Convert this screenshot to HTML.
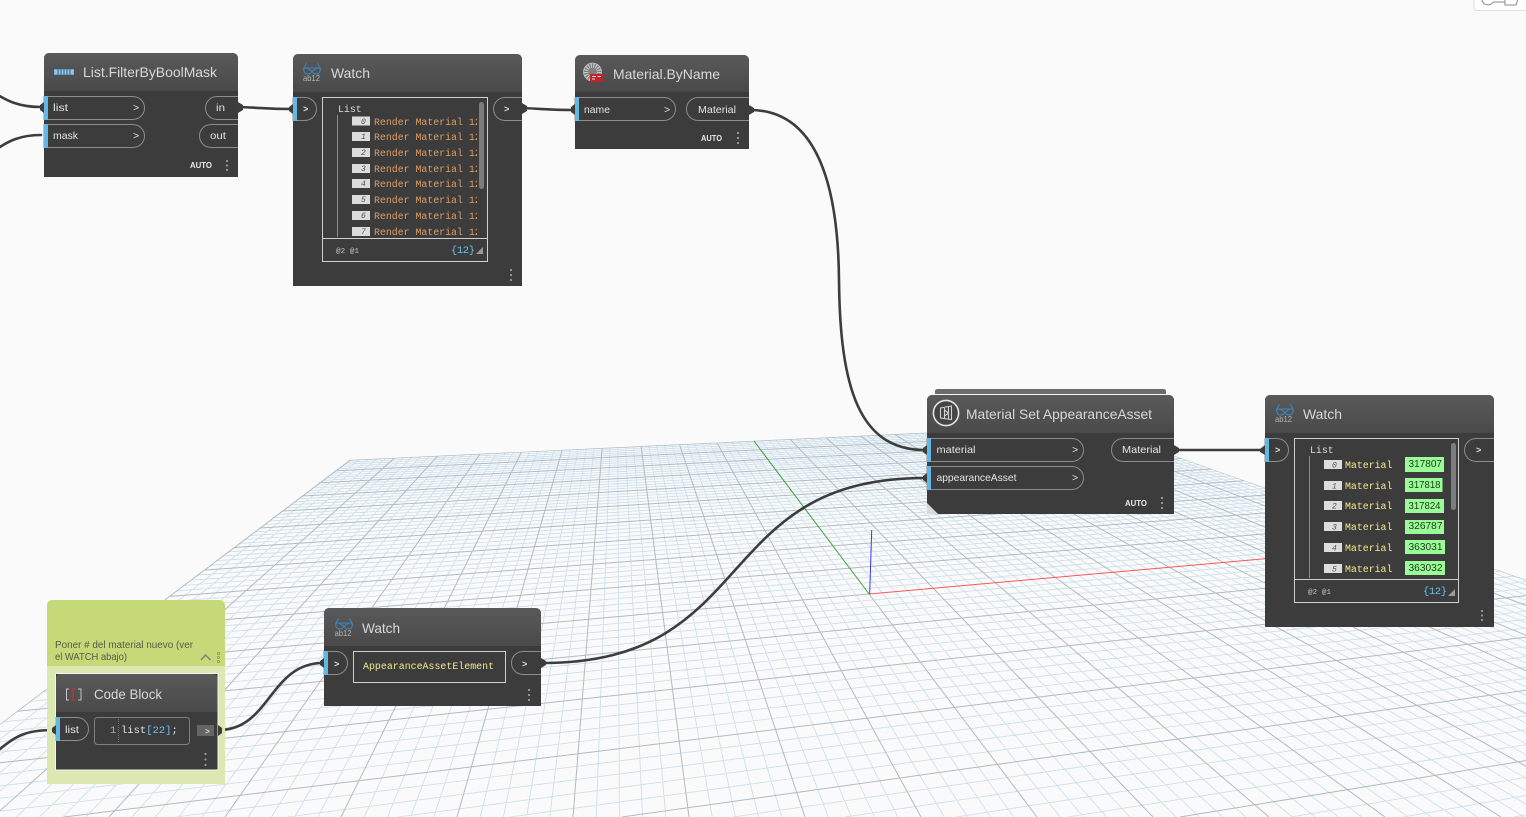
<!DOCTYPE html>
<html><head><meta charset="utf-8"><title>Dynamo graph</title>
<style>
html,body{margin:0;padding:0;background:#fafafa;width:1526px;height:817px;overflow:hidden}
svg{display:block;position:absolute;left:0;top:0}
text{font-family:"Liberation Sans",sans-serif;white-space:pre}
.t{font-size:14px;fill:#d8d8d8}
.p{font-size:10.5px;fill:#e4e4e4}
.a{font-size:8px;font-weight:bold;fill:#e8e8e8}
.m{font-family:"Liberation Mono",monospace;font-size:9.9px}
.or{fill:#dd9e66}
.ye{fill:#f3e88f}
.wh{fill:#dcdcdc}
.ix{font-family:"Liberation Mono",monospace;font-style:italic;font-size:8px;fill:#555}
.ft{font-family:"Liberation Mono",monospace;font-size:7.5px;fill:#c8c8c8}
.br{font-family:"Liberation Mono",monospace;font-size:10.5px;fill:#6ac0e7}
.gn{font-size:10.5px;fill:#1d3a1d}
.ab{font-size:8.5px;fill:#b5b5b5}
.arrow{font-family:"Liberation Mono",monospace;font-size:9px;font-weight:bold;fill:#ddd}
.nb{fill:#3c3c3c}
.pt{fill:#3c3c3c;stroke:#8c8c8c;stroke-width:1}
.bl{fill:#63b7e3}
.wire{fill:none;stroke:#3d3d3d;stroke-width:2.6;stroke-linecap:round}
.dot{fill:#3d3d3d}
.dots{fill:#9a9a9a}
.panel{fill:none;stroke:#cfcfcf;stroke-width:1}
</style></head><body>
<svg width="1526" height="817" viewBox="0 0 1526 817" xmlns="http://www.w3.org/2000/svg">
<defs>
<linearGradient id="hd" x1="0" y1="0" x2="0" y2="1"><stop offset="0" stop-color="#595959"/><stop offset="1" stop-color="#4a4a4a"/></linearGradient>
<clipPath id="plane"><polygon points="349,460 1087,425 2197,817 -123,817"/></clipPath>
<clipPath id="c1"><rect x="330" y="100" width="147" height="138"/></clipPath>
<clipPath id="c2"><rect x="1300" y="440" width="150" height="139"/></clipPath>
<symbol id="gl" viewBox="0 0 18 12" width="18" height="12" overflow="visible">
<path d="M3.5 .3 L1 5 M14.5 .3 L17 5 M.8 5 H17.2 V8.2 L15.4 10.8 H11 L9 8.2 L7 10.8 H2.6 L.8 8.2 Z M4 5 L9 8.2 L14 5" fill="none" stroke="#3f84bd" stroke-width="1.1" stroke-linejoin="round"/>
</symbol>
</defs>

<rect width="1526" height="817" fill="#fafafa"/>

<!-- top-right floating control -->
<path d="M1474 -2 V8 Q1474 10.5 1477 10.5 H1528 V-2 Z" fill="#fff" stroke="#dedede"/>
<path d="M1482 0 A6 6 0 0 0 1493 2 H1505 M1505 -1 V5 H1516 L1518 -1" fill="none" stroke="#8a8a8a" stroke-width="1"/>

<!-- perspective grid -->
<g clip-path="url(#plane)" fill="none">
<path stroke="#cbdfec" stroke-width="0.85" d="
M411.5 419L-99.8 817M418.1 419L-76.6 817M424.8 419L-53.4 817M431.4 419L-30.2 817
M444.7 419L16.2 817M451.4 419L39.4 817M458 419L62.6 817M464.7 419L85.8 817
M478 419L132.2 817M484.6 419L155.4 817M491.3 419L178.6 817M497.9 419L201.8 817
M511.2 419L248.2 817M517.9 419L271.4 817M524.5 419L294.6 817M531.2 419L317.8 817
M544.5 419L364.2 817M551.1 419L387.4 817M557.8 419L410.6 817M564.4 419L433.8 817
M577.8 419L480.2 817M584.4 419L503.4 817M591.1 419L526.6 817M597.7 419L549.8 817
M611 419L596.2 817M617.7 419L619.4 817M624.3 419L642.6 817M631 419L665.8 817
M644.3 419L712.2 817M650.9 419L735.4 817M657.6 419L758.6 817M664.2 419L781.8 817
M677.5 419L828.2 817M684.2 419L851.4 817M690.8 419L874.6 817M697.5 419L897.8 817
M710.8 419L944.2 817M717.4 419L967.4 817M724.1 419L990.6 817M730.7 419L1013.8 817
M744.1 419L1060.2 817M750.7 419L1083.4 817M757.4 419L1106.6 817M764 419L1129.8 817
M777.3 419L1176.2 817M784 419L1199.4 817M790.6 419L1222.6 817M797.3 419L1245.8 817
M810.6 419L1292.2 817M817.2 419L1315.4 817M823.9 419L1338.6 817M830.5 419L1361.8 817
M843.8 419L1408.2 817M850.5 419L1431.4 817M857.1 419L1454.6 817M863.8 419L1477.8 817
M877.1 419L1524.2 817M883.7 419L1547.4 817M890.4 419L1570.6 817M897.1 419L1593.8 817
M910.4 419L1640.2 817M917 419L1663.4 817M923.7 419L1686.6 817M930.3 419L1709.8 817
M943.6 419L1756.2 817M950.3 419L1779.4 817M956.9 419L1802.6 817M963.6 419L1825.8 817
M976.9 419L1872.2 817M983.5 419L1895.4 817M990.2 419L1918.6 817M996.8 419L1941.8 817
M1010.1 419L1988.2 817M1016.8 419L2011.4 817M1023.5 419L2034.6 817M1030.1 419L2057.8 817
M1043.4 419L2104.2 817M1050.1 419L2127.4 817M1056.7 419L2150.6 817M1063.4 419L2173.8 817
M3715 419L1514 817M3683 419L1403 817M3651 419L1291 817
M3587 419L1068 817M3555 419L956 817M3523 419L845 817M3491 419L733 817
M3427 419L510 817M3395 419L398 817M3363 419L287 817M3331 419L175 817
M3267 419L-48 817M3235 419L-160 817M3203 419L-271 817M3171 419L-383 817
M3107 419L-606 817M3075 419L-718 817M3043 419L-829 817M3011 419L-941 817
M2947 419L-1164 817M2915 419L-1276 817M2883 419L-1387 817M2851 419L-1499 817
M2787 419L-1722 817M2755 419L-1834 817M2723 419L-1945 817M2691 419L-2057 817
M2627 419L-2280 817M2595 419L-2392 817M2563 419L-2503 817M2531 419L-2615 817
M2467 419L-2838 817M2435 419L-2950 817M2403 419L-3061 817M2371 419L-3173 817
M2307 419L-3396 817M2275 419L-3508 817M2243 419L-3619 817M2211 419L-3731 817
M2147 419L-3954 817M2115 419L-4066 817M2083 419L-4177 817M2051 419L-4289 817
M1987 419L-4512 817M1955 419L-4624 817M1923 419L-4735 817M1891 419L-4847 817
M1827 419L-5070 817M1795 419L-5182 817M1763 419L-5293 817M1731 419L-5405 817
M1667 419L-5628 817M1635 419L-5740 817M1603 419L-5851 817M1571 419L-5963 817
M1507 419L-6186 817M1475 419L-6298 817M1443 419L-6409 817M1411 419L-6521 817
M1347 419L-6744 817M1315 419L-6856 817M1283 419L-6967 817M1251 419L-7079 817"/>
<path stroke="#b0bbc2" stroke-width="1" d="
M404.8 419L-123 817M438.1 419L-7 817M471.3 419L109 817M504.6 419L225 817M537.8 419L341 817
M571.1 419L457 817M604.4 419L573 817M637.6 419L689 817M670.9 419L805 817M704.1 419L921 817
M770.7 419L1153 817M803.9 419L1269 817M837.2 419L1385 817M870.4 419L1501 817
M903.7 419L1617 817M937 419L1733 817M970.2 419L1849 817M1003.5 419L1965 817M1036.8 419L2081 817M1070 419L2197 817
M3619 419L1180 817M3459 419L622 817M3299 419L64 817M3139 419L-495 817M2979 419L-1053 817
M2659 419L-2169 817M2499 419L-2727 817M2339 419L-3285 817M2179 419L-3843 817
M2019 419L-4401 817M1859 419L-4959 817M1699 419L-5517 817M1539 419L-6075 817M1379 419L-6633 817M1219 419L-7191 817
M869.1 594L1037 817M869.1 594L-1611 817"/>
</g>

<!-- axes -->
<line x1="869.1" y1="594" x2="754" y2="441" stroke="#3f9d3f" stroke-width="1"/>
<line x1="869.1" y1="594" x2="1266" y2="558.6" stroke="#f25a5a" stroke-width="1"/>
<line x1="869.7" y1="594" x2="871.7" y2="530" stroke="#3a3af0" stroke-width="1"/>

<!-- wires -->
<path class="wire" d="M-10 90 C8 102 20 107 41 107"/>
<path class="wire" d="M-6 151 C8 141 20 135 41 135"/>
<path class="wire" d="M240 107 C265 108 268 109 291 109"/>
<path class="wire" d="M522 108 C546 109 550 110 573 110"/>
<path class="wire" d="M750 110 C810 110 838 170 839 280 C840 390 860 450 925 450"/>
<path class="wire" d="M1175 450 H1264"/>
<path class="wire" d="M543 663 C760 663 710 478 925 478"/>
<path class="wire" d="M219 730 C270 730 270 663 323 663"/>
<path class="wire" d="M-6 754 C15 736 25 730 53 730"/>

<!-- group -->
<path d="M47 666 V606 Q47 600 53 600 H219 Q225 600 225 606 V666 Z" fill="#c5d978"/>
<rect x="47" y="666" width="178" height="118" fill="#dce8b2"/>
<text x="55" y="648" font-size="9.7" fill="#565a48" textLength="138" lengthAdjust="spacingAndGlyphs">Poner # del material nuevo (ver</text>
<text x="55" y="660" font-size="9.7" fill="#565a48" textLength="72" lengthAdjust="spacingAndGlyphs">el WATCH abajo)</text>
<path d="M201 660 L205.5 655 L210.5 660" fill="none" stroke="#7d8680" stroke-width="1.5"/>
<g fill="none" stroke="#8a9270" stroke-width=".8"><circle cx="218.5" cy="653.5" r="1.1"/><circle cx="218.5" cy="657.5" r="1.1"/><circle cx="218.5" cy="661.5" r="1.1"/></g>

<!-- Node: List.FilterByBoolMask -->
<path class="nb" d="M44 177 V59 Q44 53 50 53 H232 Q238 53 238 59 V177 Z"/>
<path fill="url(#hd)" d="M44 91 V59 Q44 53 50 53 H232 Q238 53 238 59 V91 Z"/>
<g fill="none" stroke="#66b5e5" stroke-width="1"><rect x="54.5" y="69.5" width="19" height="5" fill="#9cc7e6"/><path d="M58 69V75M61 69V75M64 69V75M67 69V75M70 69V75" stroke="#33566e"/></g>
<text class="t" x="83" y="77" textLength="134" lengthAdjust="spacingAndGlyphs">List.FilterByBoolMask</text>
<path class="pt" d="M44 96.5 H133 A11.5 11.5 0 0 1 144.5 108 A11.5 11.5 0 0 1 133 119.5 H44 Z"/><rect class="bl" x="44" y="96" width="4" height="24"/>
<path class="pt" d="M44 124.5 H133 A11.5 11.5 0 0 1 144.5 136 A11.5 11.5 0 0 1 133 147.5 H44 Z"/><rect class="bl" x="44" y="124" width="4" height="24"/>
<path class="pt" d="M238 96.5 H217 A11.5 11.5 0 0 0 205.5 108 A11.5 11.5 0 0 0 217 119.5 H238"/>
<path class="pt" d="M238 124.5 H211 A11.5 11.5 0 0 0 199.5 136 A11.5 11.5 0 0 0 211 147.5 H238"/>
<text class="p" x="53" y="111" textLength="15" lengthAdjust="spacingAndGlyphs">list</text>
<text class="p" x="53" y="139" textLength="25" lengthAdjust="spacingAndGlyphs">mask</text>
<text class="p" x="133" y="111">&gt;</text><text class="p" x="133" y="139">&gt;</text>
<text class="p" x="216" y="111" textLength="9" lengthAdjust="spacingAndGlyphs">in</text>
<text class="p" x="210" y="139" textLength="16" lengthAdjust="spacingAndGlyphs">out</text>
<text class="a" x="190" y="168" textLength="22" lengthAdjust="spacingAndGlyphs">AUTO</text>
<g class="dots"><circle cx="227" cy="161" r="1.1"/><circle cx="227" cy="165.5" r="1.1"/><circle cx="227" cy="170" r="1.1"/></g>
<path class="dot" d="M44 102 L40 105 V110 L44 113Z M238 102 L243 105 V110 L238 113Z"/>

<!-- Node: Watch 1 -->
<path class="nb" d="M293 286 V60 Q293 54 299 54 H516 Q522 54 522 60 V286 Z"/>
<path fill="url(#hd)" d="M293 92 V60 Q293 54 299 54 H516 Q522 54 522 60 V92 Z"/>
<use href="#gl" x="303" y="63"/>
<text class="ab" x="303" y="81" textLength="17" lengthAdjust="spacingAndGlyphs">ab12</text>
<text class="t" x="331" y="78" textLength="39" lengthAdjust="spacingAndGlyphs">Watch</text>
<path class="pt" d="M293 97.5 H305 A11.5 11.5 0 0 1 316.5 109 A11.5 11.5 0 0 1 305 120.5 H293 Z"/><rect class="bl" x="293" y="97" width="4" height="24"/>
<path class="pt" d="M522 97.5 H505 A11.5 11.5 0 0 0 493.5 109 A11.5 11.5 0 0 0 505 120.5 H522"/>
<text class="arrow" x="303" y="112">&gt;</text><text class="arrow" x="504" y="112">&gt;</text>
<rect class="panel" x="322.5" y="97.5" width="165" height="164"/>
<line x1="323" y1="238.5" x2="487" y2="238.5" stroke="#cfcfcf"/>
<line x1="337.5" y1="115" x2="337.5" y2="237" stroke="#8a8a8a"/>
<text class="m wh" x="338" y="112">List</text>
<g clip-path="url(#c1)">
<g fill="#dcdcdc"><rect x="352" y="116.5" width="18" height="9"/><rect x="352" y="132" width="18" height="9"/><rect x="352" y="148" width="18" height="9"/><rect x="352" y="164" width="18" height="9"/><rect x="352" y="179" width="18" height="9"/><rect x="352" y="195" width="18" height="9"/><rect x="352" y="211" width="18" height="9"/><rect x="352" y="227" width="18" height="9"/></g>
<text class="ix" x="361" y="124">0</text><text class="ix" x="361" y="139">1</text><text class="ix" x="361" y="155">2</text><text class="ix" x="361" y="171">3</text><text class="ix" x="361" y="186">4</text><text class="ix" x="361" y="202">5</text><text class="ix" x="361" y="218">6</text><text class="ix" x="361" y="234">7</text>
<text class="m or" x="374" y="125">Render Material 12</text>
<text class="m or" x="374" y="140">Render Material 12</text>
<text class="m or" x="374" y="156">Render Material 12</text>
<text class="m or" x="374" y="172">Render Material 12</text>
<text class="m or" x="374" y="187">Render Material 12</text>
<text class="m or" x="374" y="203">Render Material 12</text>
<text class="m or" x="374" y="219">Render Material 12</text>
<text class="m or" x="374" y="235">Render Material 12</text>
</g>
<rect x="479" y="102" width="5" height="87" rx="2.5" fill="#7d7d7d"/>
<text class="ft" x="336" y="253" textLength="23">@2 @1</text>
<text class="br" x="451" y="253" textLength="24">{12}</text>
<path d="M476 254 L483 247 V254 Z" fill="#9a9a9a"/>
<g class="dots"><circle cx="511" cy="270" r="1.1"/><circle cx="511" cy="275" r="1.1"/><circle cx="511" cy="280" r="1.1"/></g>
<path class="dot" d="M293 104 L289 107 V111 L293 114Z M522 103 L527 106 V111 L522 114Z"/>

<!-- Node: Material.ByName -->
<path class="nb" d="M575 149 V61 Q575 55 581 55 H743 Q749 55 749 61 V149 Z"/>
<path fill="url(#hd)" d="M575 92 V61 Q575 55 581 55 H743 Q749 55 749 61 V92 Z"/>
<circle cx="592.5" cy="72" r="9" fill="#7e7e7e" stroke="#bdbdbd" stroke-width=".8"/>
<circle cx="592.5" cy="72" r="6.5" fill="none" stroke="#d0d0d0" stroke-width="4.5" stroke-dasharray="1 1.4"/>
<rect x="590" y="74" width="13" height="8" fill="#b8272b"/>
<path d="M592 76.5H596M592 79H595M597.5 76.5H601" stroke="#f0d0d0" stroke-width="1"/>
<text class="t" x="613" y="79" textLength="107" lengthAdjust="spacingAndGlyphs">Material.ByName</text>
<path class="pt" d="M575 97.5 H664 A11.5 11.5 0 0 1 675.5 109 A11.5 11.5 0 0 1 664 120.5 H575 Z"/><rect class="bl" x="575" y="97" width="4" height="24"/>
<path class="pt" d="M749 97.5 H698 A11.5 11.5 0 0 0 686.5 109 A11.5 11.5 0 0 0 698 120.5 H749"/>
<text class="p" x="584" y="113" textLength="26" lengthAdjust="spacingAndGlyphs">name</text>
<text class="p" x="664" y="113">&gt;</text>
<text class="p" x="698" y="113" textLength="38" lengthAdjust="spacingAndGlyphs">Material</text>
<text class="a" x="701" y="141" textLength="21" lengthAdjust="spacingAndGlyphs">AUTO</text>
<g class="dots"><circle cx="738" cy="133" r="1.1"/><circle cx="738" cy="138" r="1.1"/><circle cx="738" cy="143" r="1.1"/></g>
<path class="dot" d="M575 104 L571 107 V112 L575 115Z M749 105 L754 108 V112 L749 115Z"/>

<!-- Node: Material Set AppearanceAsset -->
<path d="M935 394 V391 Q935 389 938 389 H1163 Q1166 389 1166 391 V394 Z" fill="#6b6b6b"/>
<rect x="927" y="394" width="247" height="1" fill="#f4f4f4"/>
<path class="nb" d="M927 514 V401 Q927 395 933 395 H1168 Q1174 395 1174 401 V514 Z"/>
<path fill="url(#hd)" d="M927 433 V401 Q927 395 933 395 H1168 Q1174 395 1174 401 V433 Z"/>
<path d="M927 503 L938 514 H927 Z" fill="#d9d9d9"/>
<circle cx="946" cy="413" r="12.6" fill="#454545" stroke="#e4e4e4" stroke-width="1.6"/>
<path d="M940.5 408 L951.5 406 V419.5 L940.5 418 Z M944.5 408 V418 M948.5 407 V419 M944.5 410 L948.5 413 L944.5 416" fill="none" stroke="#d0d0d0" stroke-width="1.1"/>
<text class="t" x="966" y="419" textLength="186" lengthAdjust="spacingAndGlyphs">Material Set AppearanceAsset</text>
<path class="pt" d="M927 438.5 H1072 A11.5 11.5 0 0 1 1083.5 450 A11.5 11.5 0 0 1 1072 461.5 H927 Z"/><rect class="bl" x="927" y="438" width="4" height="24"/>
<path class="pt" d="M927 466.5 H1072 A11.5 11.5 0 0 1 1083.5 478 A11.5 11.5 0 0 1 1072 489.5 H927 Z"/><rect class="bl" x="927" y="466" width="4" height="24"/>
<path class="pt" d="M1174 438.5 H1123 A11.5 11.5 0 0 0 1111.5 450 A11.5 11.5 0 0 0 1123 461.5 H1174"/>
<text class="p" x="936.5" y="453" textLength="39" lengthAdjust="spacingAndGlyphs">material</text>
<text class="p" x="936.5" y="481" textLength="80" lengthAdjust="spacingAndGlyphs">appearanceAsset</text>
<text class="p" x="1072" y="453">&gt;</text><text class="p" x="1072" y="481">&gt;</text>
<text class="p" x="1122" y="453" textLength="39" lengthAdjust="spacingAndGlyphs">Material</text>
<text class="a" x="1125" y="506" textLength="22" lengthAdjust="spacingAndGlyphs">AUTO</text>
<g class="dots"><circle cx="1162" cy="498" r="1.1"/><circle cx="1162" cy="503" r="1.1"/><circle cx="1162" cy="508" r="1.1"/></g>
<path class="dot" d="M927 445 L923 448 V452 L927 455Z M927 473 L923 476 V480 L927 483Z M1174 445 L1179 448 V452 L1174 455Z"/>

<!-- Node: Watch 2 -->
<path class="nb" d="M1265 627 V401 Q1265 395 1271 395 H1488 Q1494 395 1494 401 V627 Z"/>
<path fill="url(#hd)" d="M1265 433 V401 Q1265 395 1271 395 H1488 Q1494 395 1494 401 V433 Z"/>
<use href="#gl" x="1276" y="404"/>
<text class="ab" x="1275" y="422" textLength="17" lengthAdjust="spacingAndGlyphs">ab12</text>
<text class="t" x="1303" y="419" textLength="39" lengthAdjust="spacingAndGlyphs">Watch</text>
<path class="pt" d="M1265 438.5 H1277 A11.5 11.5 0 0 1 1288.5 450 A11.5 11.5 0 0 1 1277 461.5 H1265 Z"/><rect class="bl" x="1265" y="438" width="4" height="24"/>
<path class="pt" d="M1494 438.5 H1476 A11.5 11.5 0 0 0 1464.5 450 A11.5 11.5 0 0 0 1476 461.5 H1494"/>
<text class="arrow" x="1275" y="453">&gt;</text><text class="arrow" x="1476" y="453">&gt;</text>
<rect class="panel" x="1294.5" y="438.5" width="164" height="164"/>
<line x1="1295" y1="579.5" x2="1458" y2="579.5" stroke="#cfcfcf"/>
<line x1="1309.5" y1="456" x2="1309.5" y2="578" stroke="#8a8a8a"/>
<text class="m wh" x="1310" y="453">List</text>
<g clip-path="url(#c2)">
<g fill="#dcdcdc"><rect x="1324" y="460" width="18" height="9"/><rect x="1324" y="481" width="18" height="9"/><rect x="1324" y="501" width="18" height="9"/><rect x="1324" y="522" width="18" height="9"/><rect x="1324" y="543" width="18" height="9"/><rect x="1324" y="564" width="18" height="9"/></g>
<text class="ix" x="1332" y="467.5">0</text><text class="ix" x="1332" y="488.5">1</text><text class="ix" x="1332" y="508.5">2</text><text class="ix" x="1332" y="529.5">3</text><text class="ix" x="1332" y="550.5">4</text><text class="ix" x="1332" y="571.5">5</text>
<text class="m ye" x="1345" y="468">Material</text>
<text class="m ye" x="1345" y="489">Material</text>
<text class="m ye" x="1345" y="509">Material</text>
<text class="m ye" x="1345" y="530">Material</text>
<text class="m ye" x="1345" y="551">Material</text>
<text class="m ye" x="1345" y="572">Material</text>
<g fill="#9afc96"><rect x="1405" y="457" width="39" height="15"/><rect x="1405" y="478" width="37.5" height="14"/><rect x="1405" y="499" width="39" height="14"/><rect x="1405" y="520" width="39" height="14"/><rect x="1405" y="540" width="40" height="14"/><rect x="1405" y="561" width="40" height="14"/></g>
<text class="gn" x="1408.5" y="467" textLength="33.5" lengthAdjust="spacingAndGlyphs">317807</text>
<text class="gn" x="1408.5" y="488" textLength="32" lengthAdjust="spacingAndGlyphs">317818</text>
<text class="gn" x="1408.5" y="509" textLength="32" lengthAdjust="spacingAndGlyphs">317824</text>
<text class="gn" x="1408.5" y="529" textLength="34" lengthAdjust="spacingAndGlyphs">326787</text>
<text class="gn" x="1408.5" y="550" textLength="34" lengthAdjust="spacingAndGlyphs">363031</text>
<text class="gn" x="1408.5" y="571" textLength="34" lengthAdjust="spacingAndGlyphs">363032</text>
</g>
<rect x="1451" y="443" width="5" height="67" rx="2.5" fill="#7d7d7d"/>
<text class="ft" x="1308" y="594" textLength="23">@2 @1</text>
<text class="br" x="1423" y="594" textLength="24">{12}</text>
<path d="M1448 596 L1455 589 V596 Z" fill="#9a9a9a"/>
<g class="dots"><circle cx="1482" cy="611" r="1.1"/><circle cx="1482" cy="615.5" r="1.1"/><circle cx="1482" cy="620" r="1.1"/></g>
<path class="dot" d="M1265 445 L1260 449 V452 L1265 455Z"/>

<!-- Node: Code Block -->
<rect x="55.5" y="673.5" width="162.5" height="96.5" fill="#3c3c3c" stroke="#f2f2f2"/>
<path fill="url(#hd)" d="M56 712 V679 Q56 674 61 674 H212 Q217.5 674 217.5 679 V712 Z"/>
<path d="M69 689 H66.5 V700 H69 M78 689 H81 V700 H78" fill="none" stroke="#c4c4c4" stroke-width="1"/>
<path d="M71 689 H75 M73 689 V700 M71 700 H75" fill="none" stroke="#b8383a" stroke-width="1.3"/>
<text class="t" x="94" y="699" textLength="68" lengthAdjust="spacingAndGlyphs">Code Block</text>
<path class="pt" d="M56 717.5 H77 A11.5 11.5 0 0 1 88.5 729 A11.5 11.5 0 0 1 77 740.5 H56 Z"/><rect class="bl" x="56" y="717" width="4" height="24"/>
<text class="p" x="65" y="733" textLength="14" lengthAdjust="spacingAndGlyphs">list</text>
<rect x="94.5" y="717.5" width="95" height="27" rx="3" fill="#3c3c3c" stroke="#7f7f7f"/>
<text x="110" y="733" font-size="10.5" fill="#8fb0c4" style="font-family:'Liberation Mono',monospace">1</text>
<line x1="118.5" y1="719" x2="118.5" y2="743" stroke="#777" stroke-dasharray="1 1"/>
<text x="121" y="733" font-size="10.5" fill="#e4e4e4" style="font-family:'Liberation Mono',monospace">list<tspan fill="#6ac0e7">[22]</tspan>;</text>
<rect x="197" y="725" width="17" height="11" fill="#666"/>
<text class="arrow" x="205" y="734" style="font-size:8px">&gt;</text>
<g class="dots"><circle cx="205.5" cy="754" r="1.1"/><circle cx="205.5" cy="759.5" r="1.1"/><circle cx="205.5" cy="765" r="1.1"/></g>
<path class="dot" d="M56 725 L52 728 V732 L56 735Z M218 725 L222 728 V733 L218 736Z"/>

<!-- Node: Watch 3 -->
<path class="nb" d="M324 706 V614 Q324 608 330 608 H535 Q541 608 541 614 V706 Z"/>
<path fill="url(#hd)" d="M324 646 V614 Q324 608 330 608 H535 Q541 608 541 614 V646 Z"/>
<use href="#gl" x="335" y="618"/>
<text class="ab" x="334.5" y="636" textLength="17" lengthAdjust="spacingAndGlyphs">ab12</text>
<text class="t" x="362" y="633" textLength="38" lengthAdjust="spacingAndGlyphs">Watch</text>
<path class="pt" d="M324 651.5 H336 A11.5 11.5 0 0 1 347.5 663 A11.5 11.5 0 0 1 336 674.5 H324 Z"/><rect class="bl" x="324" y="651" width="4" height="24"/>
<path class="pt" d="M541 651.5 H523 A11.5 11.5 0 0 0 511.5 663 A11.5 11.5 0 0 0 523 674.5 H541"/>
<text class="arrow" x="334" y="667">&gt;</text><text class="arrow" x="522" y="667">&gt;</text>
<rect class="panel" x="353.5" y="651.5" width="152" height="31"/>
<text class="m ye" x="363" y="669" textLength="131">AppearanceAssetElement</text>
<g class="dots"><circle cx="529" cy="690" r="1.1"/><circle cx="529" cy="695" r="1.1"/><circle cx="529" cy="700" r="1.1"/></g>
<path class="dot" d="M324 658 L320 661 V665 L324 668Z M541 658 L546 661 V665 L541 668Z"/>
</svg>
</body></html>
